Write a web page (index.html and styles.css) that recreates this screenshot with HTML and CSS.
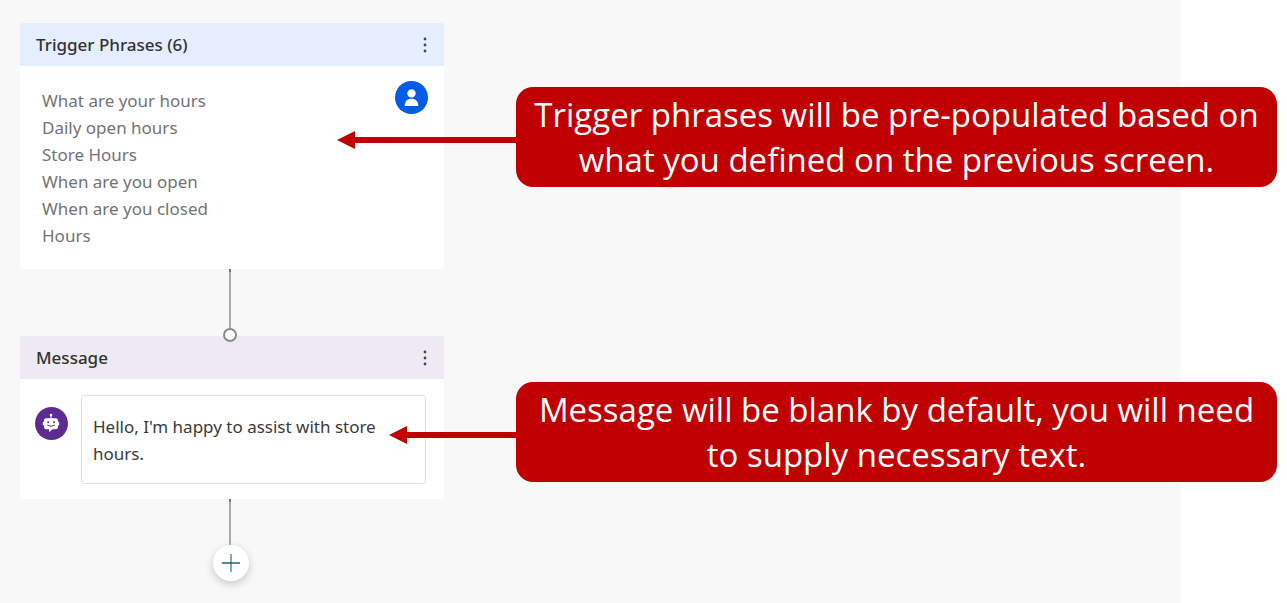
FILE: index.html
```
<!DOCTYPE html>
<html lang="en">
<head>
<meta charset="utf-8">
<title>Authoring canvas</title>
<link rel="stylesheet" href="styles.css">
</head>
<body>
<main class="canvas">
  <section class="step">
    <article class="card">
      <header class="card-header trigger">
        <h2 class="card-title">Trigger Phrases (6)</h2>
        <button class="menu-button" type="button" aria-label="Trigger options">
          <svg width="6" height="18" viewBox="0 0 6 18" fill="#484644"><circle cx="3" cy="3" r="1.4"/><circle cx="3" cy="9" r="1.4"/><circle cx="3" cy="15" r="1.4"/></svg>
        </button>
      </header>
      <div class="card-body phrases-body">
        <ul class="phrases">
          <li>What are your hours</li>
          <li>Daily open hours</li>
          <li>Store Hours</li>
          <li>When are you open</li>
          <li>When are you closed</li>
          <li>Hours</li>
        </ul>
        <svg class="avatar" viewBox="0 0 33 33" aria-hidden="true">
          <circle cx="16.5" cy="16.5" r="16.5" fill="#005be6"/>
          <circle cx="16.5" cy="12.4" r="4.2" fill="#fff"/>
          <path d="M9.700 25c0-4.600 2.600-7.200 6.800-7.200s6.800 2.600 6.800 7.200z" fill="#fff"/>
        </svg>
      </div>
    </article>
    <aside class="callout callout-trigger">
      <svg class="arrow arrow-long" viewBox="0 0 179 18" aria-hidden="true"><path d="M0 9L18 0V6H179V12H18V18z" fill="#c00000"/></svg>
      <p class="callout-text">Trigger phrases will be pre-populated based on what you defined on the previous screen.</p>
    </aside>
  </section>

  <div class="connector connector-between"><span class="port"></span></div>

  <section class="step">
    <article class="card">
      <header class="card-header message">
        <h2 class="card-title" id="message-title">Message</h2>
        <button class="menu-button" type="button" aria-label="Message options">
          <svg width="6" height="18" viewBox="0 0 6 18" fill="#484644"><circle cx="3" cy="3" r="1.4"/><circle cx="3" cy="9" r="1.4"/><circle cx="3" cy="15" r="1.4"/></svg>
        </button>
      </header>
      <div class="card-body message-body">
        <svg class="avatar bot" viewBox="0 0 33 33" aria-hidden="true">
          <circle cx="16.5" cy="16.5" r="16.5" fill="#5c2d91"/>
          <circle cx="16" cy="8" r="1.3" fill="#fff"/>
          <path d="M16 8v4" stroke="#fff" stroke-width="1.1"/>
          <path d="M11.200 11.200h9.600a2.200 2.200 0 0 1 2.200 2.200v1.300h1.200v3.600H23v1.800a2.200 2.200 0 0 1-2.200 2.200h-3.300L14 25.300v-3h-2.800A2.200 2.200 0 0 1 9 20.100v-1.800H7.800v-3.600H9v-1.300a2.200 2.200 0 0 1 2.200-2.200z" fill="#fff"/>
          <circle cx="13.2" cy="15.300" r="1" fill="#5c2d91"/>
          <circle cx="19" cy="15.300" r="1" fill="#5c2d91"/>
          <path d="M12.500 18.200q3.600 2.600 7.200 0" fill="none" stroke="#5c2d91" stroke-width="1" stroke-linecap="round"/>
        </svg>
        <textarea class="message-input" aria-labelledby="message-title" rows="2" spellcheck="false">Hello, I'm happy to assist with store hours.</textarea>
      </div>
    </article>
    <aside class="callout callout-message">
      <svg class="arrow arrow-short" viewBox="0 0 127 18" aria-hidden="true"><path d="M0 9L18 0V6H127V12H18V18z" fill="#c00000"/></svg>
      <p class="callout-text">Message will be blank by default, you will need to supply necessary text.</p>
    </aside>
  </section>

  <div class="connector connector-end"></div>
  <button class="add-button" type="button" aria-label="Add node">
    <svg width="18" height="18" viewBox="0 0 18 18" fill="none"><path d="M9 0v18" stroke="#6f8fb5" stroke-width="1.6"/><path d="M0 9h18" stroke="#0b5a7d" stroke-width="1.4"/></svg>
  </button>
</main>
</body>
</html>
```
FILE: styles.css
```
* {
  box-sizing: border-box;
}

body {
  margin: 0;
  background: #fff;
  font-family: "Noto Sans", "Open Sans", sans-serif;
  font-size: 17px;
  line-height: 27px;
}

.canvas {
  min-height: 100vh;
  margin-right: 106px;
  padding: 23px 20px 20px;
  background: #f8f8f8;
}

.step {
  position: relative;
}

.card {
  width: 424px;
  background: #fff;
  border-radius: 2px;
  overflow: hidden;
}

.card-header {
  display: flex;
  align-items: center;
  justify-content: space-between;
  height: 43px;
  padding: 0 10px 0 16px;
}

.trigger {
  background: #e5eeff;
}

.message {
  background: #edeaf4;
}

.card-title {
  margin: 0;
  color: #323130;
  font-size: 17px;
  font-weight: 500;
}

.menu-button {
  display: flex;
  align-items: center;
  justify-content: center;
  width: 18px;
  height: 26px;
  padding: 0;
  border: 0;
  background: none;
}

.card-body {
  display: flex;
  align-items: flex-start;
}

.phrases-body {
  justify-content: space-between;
  padding: 21px 16px 20px 22px;
}

.phrases {
  margin: 0;
  padding: 0;
  list-style: none;
  color: #737373;
}

.avatar {
  flex: none;
  width: 33px;
  height: 33px;
  margin-top: -6px;
}

.message-body {
  gap: 13px;
  padding: 16px 18px 15px 15px;
}

.bot {
  margin-top: 12px;
}

.message-input {
  flex: 1;
  min-width: 0;
  height: 89px;
  padding: 17px 11px;
  border: 1px solid #dedede;
  border-radius: 3px;
  background: #fff;
  color: #3b3a39;
  font: inherit;
  resize: none;
  overflow: hidden;
}

.connector {
  position: relative;
  width: 2px;
  margin-left: 209px;
  background: #aaa;
  border-top: 3px solid #777;
}

.connector-between {
  height: 67px;
  z-index: 1;
}

.connector-end {
  height: 46px;
}

.port {
  position: absolute;
  bottom: -6px;
  left: -6px;
  width: 14px;
  height: 14px;
  border: 2px solid #8a8a8a;
  border-radius: 50%;
  background: #fff;
}

.add-button {
  display: flex;
  align-items: center;
  justify-content: center;
  width: 36px;
  height: 36px;
  margin-left: 193px;
  padding: 0;
  border: 0;
  border-radius: 50%;
  background: #fff;
  box-shadow: 0 3px 8px rgba(0, 0, 0, 0.2);
}

.callout {
  position: absolute;
  left: 496px;
  right: -116px;
  display: flex;
  align-items: center;
  justify-content: center;
  min-height: 100px;
  padding: 0 16px;
  border-radius: 17px;
  background: #c00000;
  color: #fff;
}

.callout-trigger {
  top: 64px;
}

.callout-message {
  top: 46px;
}

.callout-text {
  margin: 0;
  font-family: "Open Sans", "Noto Sans", sans-serif;
  font-size: 33px;
  line-height: 45px;
  text-align: center;
}

.arrow {
  position: absolute;
  right: 100%;
  top: 44px;
  height: 18px;
}

.arrow-long {
  width: 179px;
}

.arrow-short {
  width: 127px;
}
```
